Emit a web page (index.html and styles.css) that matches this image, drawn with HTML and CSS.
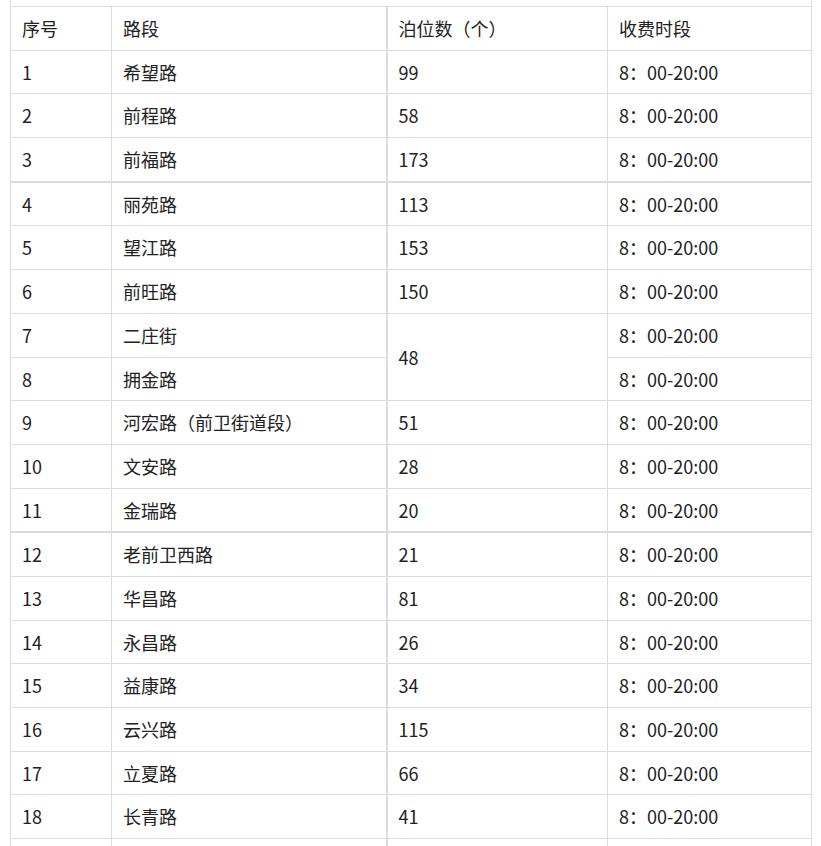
FILE: index.html
```html
<!DOCTYPE html>
<html lang="zh-CN">
<head>
<meta charset="utf-8">
<title>收费泊位</title>
<link rel="stylesheet" href="styles.css">
</head>
<body>
<table class="grid">
  <colgroup>
    <col class="c-no">
    <col class="c-road">
    <col class="c-count">
    <col class="c-time">
  </colgroup>
  <tbody>
    <tr class="lead"><td colspan="4"></td></tr>
    <tr><td>序号</td><td>路段</td><td class="count">泊位数（个）</td><td>收费时段</td></tr>
    <tr><td>1</td><td>希望路</td><td class="count">99</td><td>8：00-20:00</td></tr>
    <tr><td>2</td><td>前程路</td><td class="count">58</td><td>8：00-20:00</td></tr>
    <tr class="break"><td>3</td><td>前福路</td><td class="count">173</td><td>8：00-20:00</td></tr>
    <tr><td>4</td><td>丽苑路</td><td class="count">113</td><td>8：00-20:00</td></tr>
    <tr><td>5</td><td>望江路</td><td class="count">153</td><td>8：00-20:00</td></tr>
    <tr><td>6</td><td>前旺路</td><td class="count">150</td><td>8：00-20:00</td></tr>
    <tr><td>7</td><td>二庄街</td><td class="count" rowspan="2">48</td><td>8：00-20:00</td></tr>
    <tr><td>8</td><td>拥金路</td><td>8：00-20:00</td></tr>
    <tr><td>9</td><td>河宏路（前卫街道段）</td><td class="count">51</td><td>8：00-20:00</td></tr>
    <tr><td>10</td><td>文安路</td><td class="count">28</td><td>8：00-20:00</td></tr>
    <tr class="break"><td>11</td><td>金瑞路</td><td class="count">20</td><td>8：00-20:00</td></tr>
    <tr><td>12</td><td>老前卫西路</td><td class="count">21</td><td>8：00-20:00</td></tr>
    <tr><td>13</td><td>华昌路</td><td class="count">81</td><td>8：00-20:00</td></tr>
    <tr><td>14</td><td>永昌路</td><td class="count">26</td><td>8：00-20:00</td></tr>
    <tr><td>15</td><td>益康路</td><td class="count">34</td><td>8：00-20:00</td></tr>
    <tr><td>16</td><td>云兴路</td><td class="count">115</td><td>8：00-20:00</td></tr>
    <tr><td>17</td><td>立夏路</td><td class="count">66</td><td>8：00-20:00</td></tr>
    <tr><td>18</td><td>长青路</td><td class="count">41</td><td>8：00-20:00</td></tr>
    <tr><td>&nbsp;</td><td>&nbsp;</td><td class="count">&nbsp;</td><td>&nbsp;</td></tr>
  </tbody>
</table>
</body>
</html>
```

FILE: styles.css
```css
html, body {
  margin: 0;
  padding: 0;
  background: #ffffff;
}

body {
  padding-left: 10px;
  font-family: "Microsoft YaHei", "Noto Sans CJK SC", "Noto Sans", sans-serif;
  font-size: 18px;
  color: #222222;
}

.grid {
  border-collapse: collapse;
  table-layout: fixed;
  width: 801px;
}

.c-no { width: 101px; }
.c-road { width: 275px; }
.c-count { width: 221px; }
.c-time { width: 204px; }

.grid td {
  border: 1px solid #dcdcdc;
  padding: 7px 11px;
  line-height: 28.68px;
  text-align: left;
  vertical-align: middle;
  white-space: nowrap;
}

.grid td.count {
  border-left: 2px solid #dcdcdc;
}

.grid .lead td {
  border-top: 0;
  padding: 0;
  height: 6px;
  line-height: 6px;
}

.grid tr.break td {
  border-bottom: 2px solid #dcdcdc;
}
```
